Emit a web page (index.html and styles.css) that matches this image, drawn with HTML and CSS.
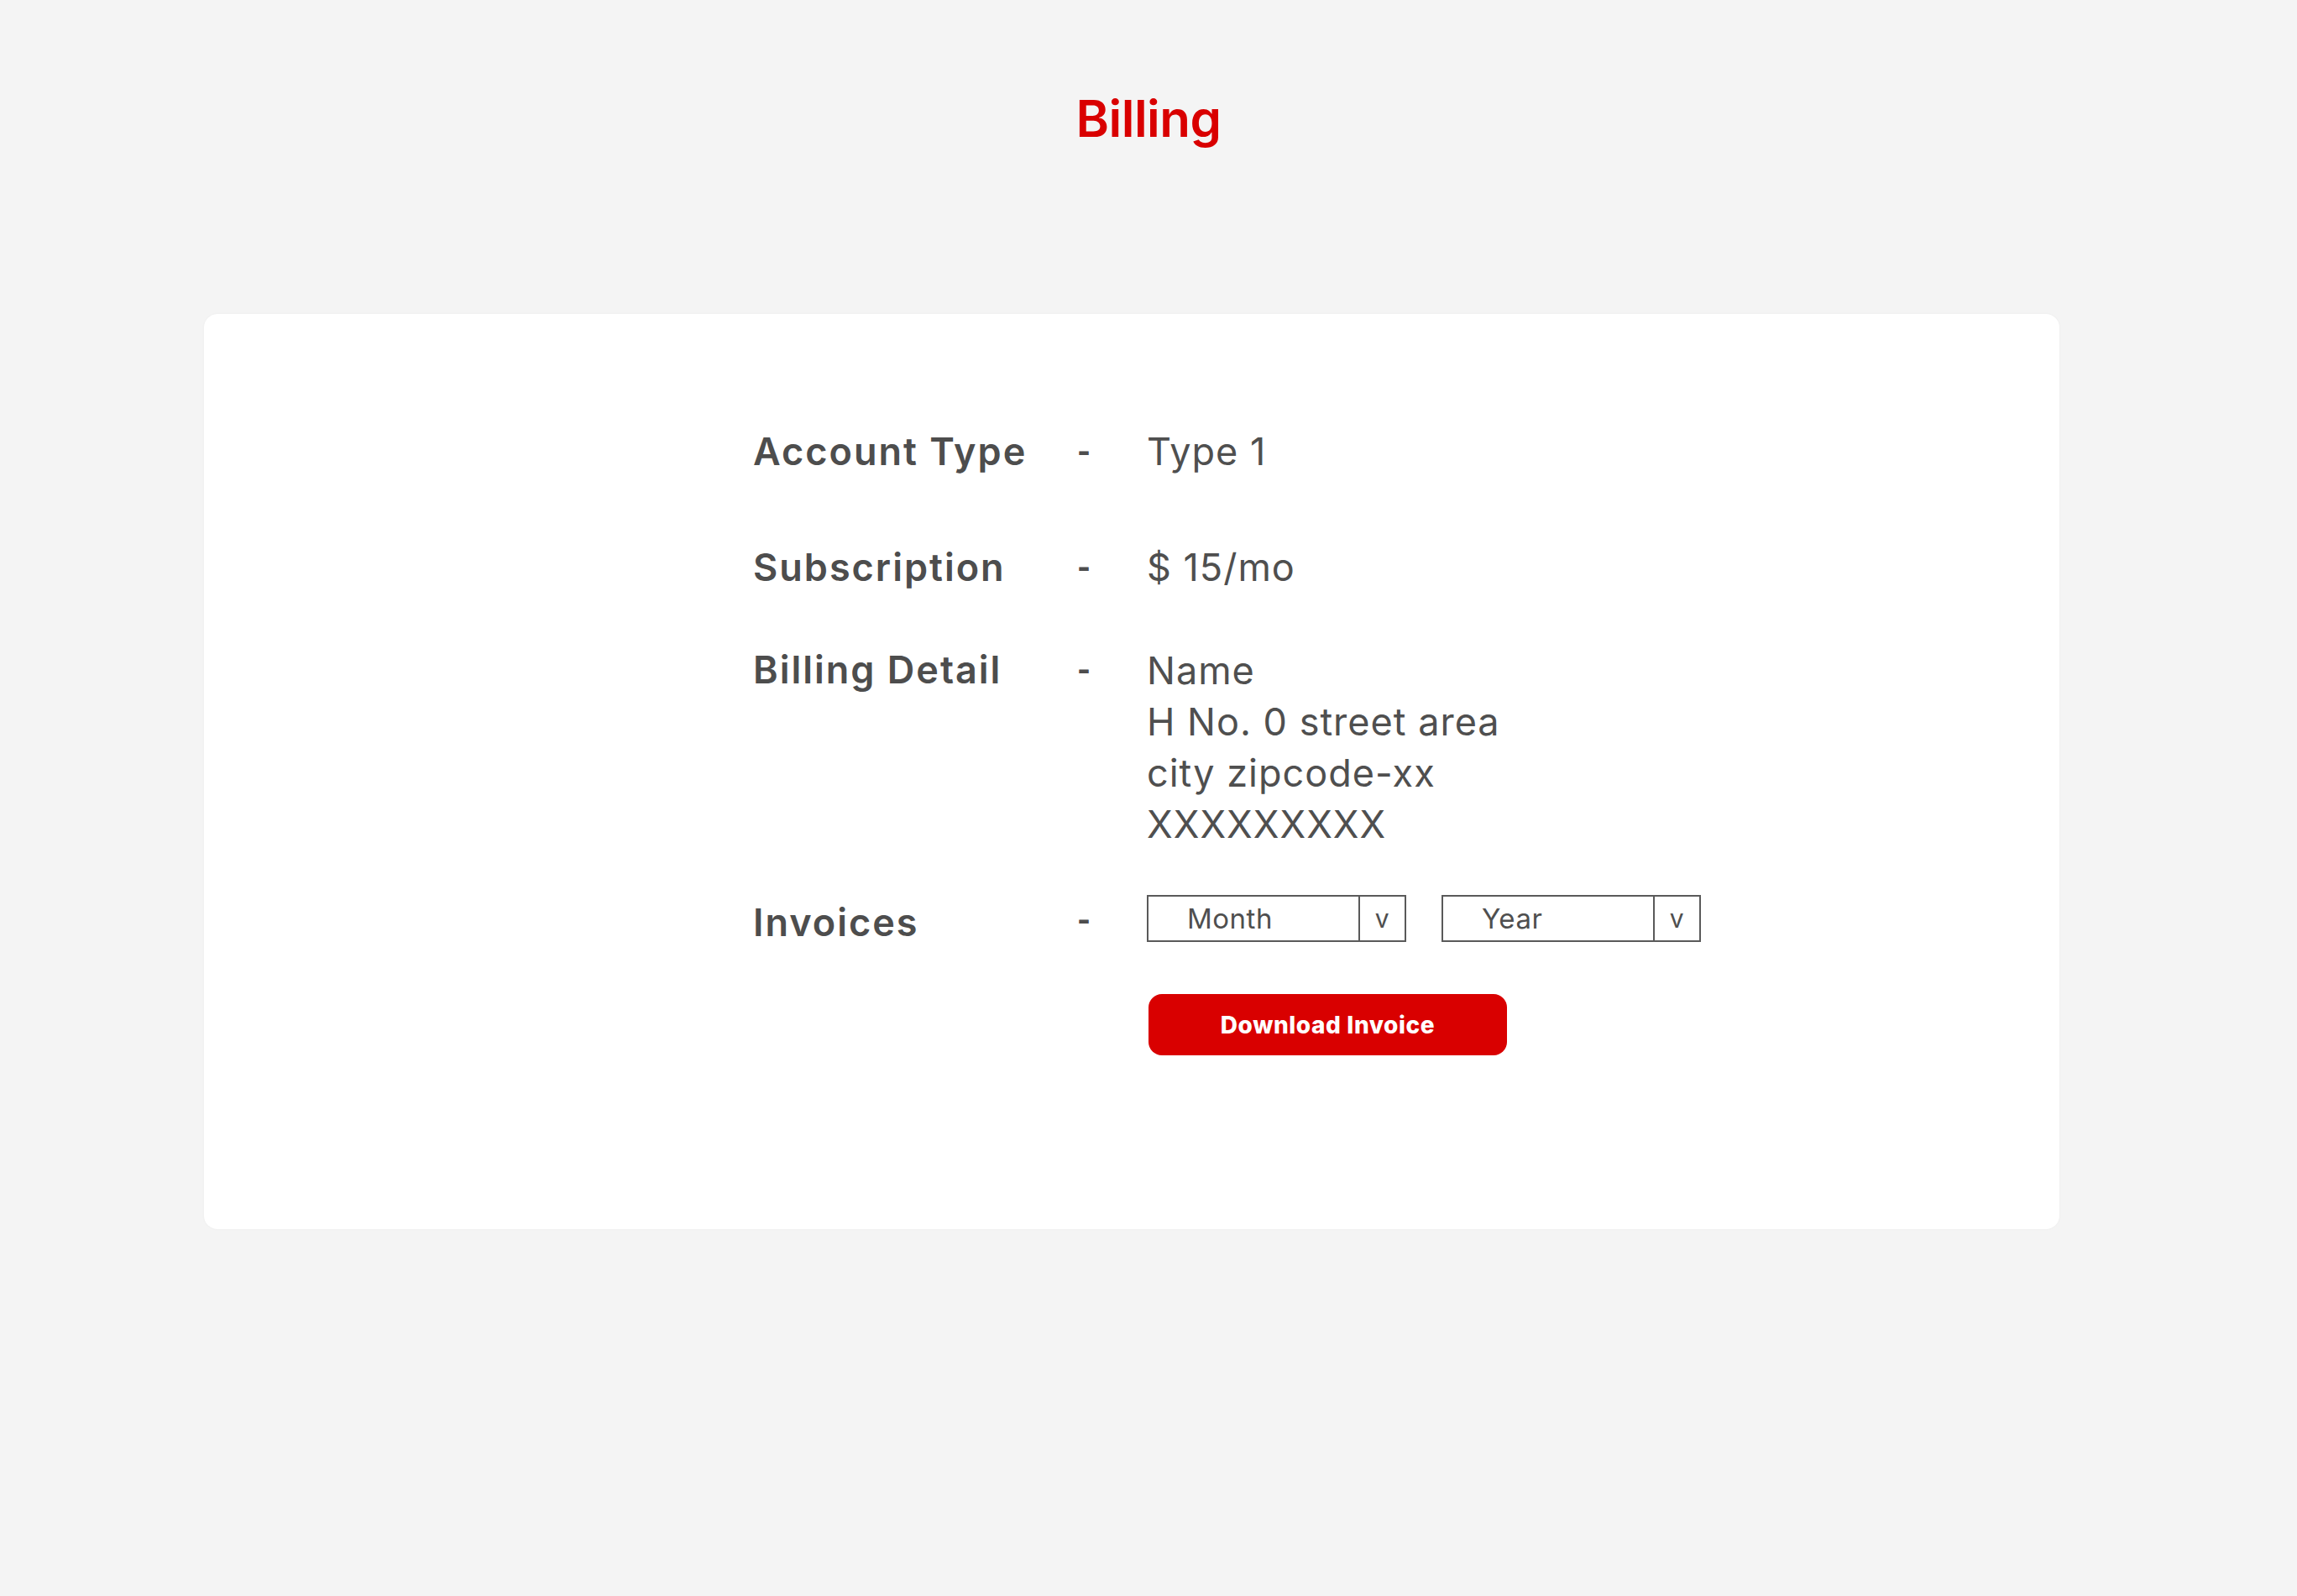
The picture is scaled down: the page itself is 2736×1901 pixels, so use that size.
FILE: index.html
```html
<!DOCTYPE html>
<html lang="en">
<head>
<meta charset="utf-8">
<title>Billing</title>
<link rel="stylesheet" href="styles.css">
</head>
<body>
<header class="page-header">
  <h1 class="page-title">Billing</h1>
</header>
<main class="card">
  <div class="details">
    <div class="row">
      <span class="label">Account Type</span>
      <span class="dash">-</span>
      <span class="value">Type 1</span>
    </div>
    <div class="row row-sub">
      <span class="label">Subscription</span>
      <span class="dash">-</span>
      <span class="value">$ 15/mo</span>
    </div>
    <div class="row row-billing">
      <span class="label">Billing Detail</span>
      <span class="dash">-</span>
      <div class="value address">
        <div>Name</div>
        <div>H No. 0 street area</div>
        <div>city zipcode-xx</div>
        <div>XXXXXXXXX</div>
      </div>
    </div>
    <div class="row row-invoices">
      <span class="label">Invoices</span>
      <span class="dash">-</span>
      <div class="value selects">
        <div class="select">
          <span class="select-text">Month</span>
          <span class="select-arrow">v</span>
        </div>
        <div class="select">
          <span class="select-text">Year</span>
          <span class="select-arrow">v</span>
        </div>
      </div>
    </div>
    <div class="row row-action">
      <span></span>
      <span></span>
      <div class="value">
        <button class="download-btn" type="button">Download Invoice</button>
      </div>
    </div>
  </div>
</main>
</body>
</html>
```

FILE: styles.css
```css
html, body {
  margin: 0;
  padding: 0;
}

body {
  background: #f4f4f4;
  font-family: Inter, "Open Sans", "Liberation Sans", sans-serif;
  color: #4f4f4f;
  min-height: 1901px;
}

.page-header {
  padding-top: 105px;
  display: flex;
  justify-content: center;
}

.page-title {
  margin: 0;
  font-size: 60px;
  line-height: 72px;
  font-weight: 600;
  color: #d90000;
  letter-spacing: -0.5px;
}

.card {
  margin: 197px 0 0 243px;
  width: 2210px;
  height: 1090px;
  box-sizing: border-box;
  background: #ffffff;
  border-radius: 16px;
  box-shadow: 0 0 3px rgba(0, 0, 0, 0.04);
  padding: 134px 0 0 654px;
}

.details {
  display: flex;
  flex-direction: column;
}

.row {
  display: grid;
  grid-template-columns: 386px 83px auto;
  align-items: start;
  font-size: 45px;
  line-height: 60px;
}

.row-sub {
  margin-top: 78px;
}

.row-billing {
  margin-top: 62px;
}

.row-invoices {
  margin-top: 54px;
}

.row-action {
  margin-top: 55px;
}

.label {
  font-weight: 600;
  color: #4d4d4d;
  letter-spacing: 2px;
}

.row-invoices .label {
  padding-top: 3px;
}

.dash {
  font-size: 34px;
  font-weight: 800;
  color: #4d4d4d;
}

.value {
  font-weight: 400;
  color: #4f4f4f;
  letter-spacing: 1px;
}

.address {
  line-height: 61px;
}

.selects {
  display: flex;
  gap: 42px;
  padding-left: 0;
  letter-spacing: 0.5px;
}

.select {
  display: flex;
  width: 309px;
  height: 56px;
  box-sizing: border-box;
  border: 2px solid #5a5a5a;
  font-size: 33px;
  line-height: 52px;
}

.select-text {
  flex: 1;
  padding-left: 46px;
}

.select-arrow {
  width: 53px;
  border-left: 2px solid #5a5a5a;
  text-align: center;
  font-size: 30px;
}

.download-btn {
  margin-left: 2px;
  width: 427px;
  height: 73px;
  border: none;
  border-radius: 16px;
  background: #d90000;
  color: #ffffff;
  font-family: Inter, "Open Sans", "Liberation Sans", sans-serif;
  font-size: 28px;
  font-weight: 800;
  letter-spacing: 0.6px;
  cursor: pointer;
  padding: 0;
}
```
